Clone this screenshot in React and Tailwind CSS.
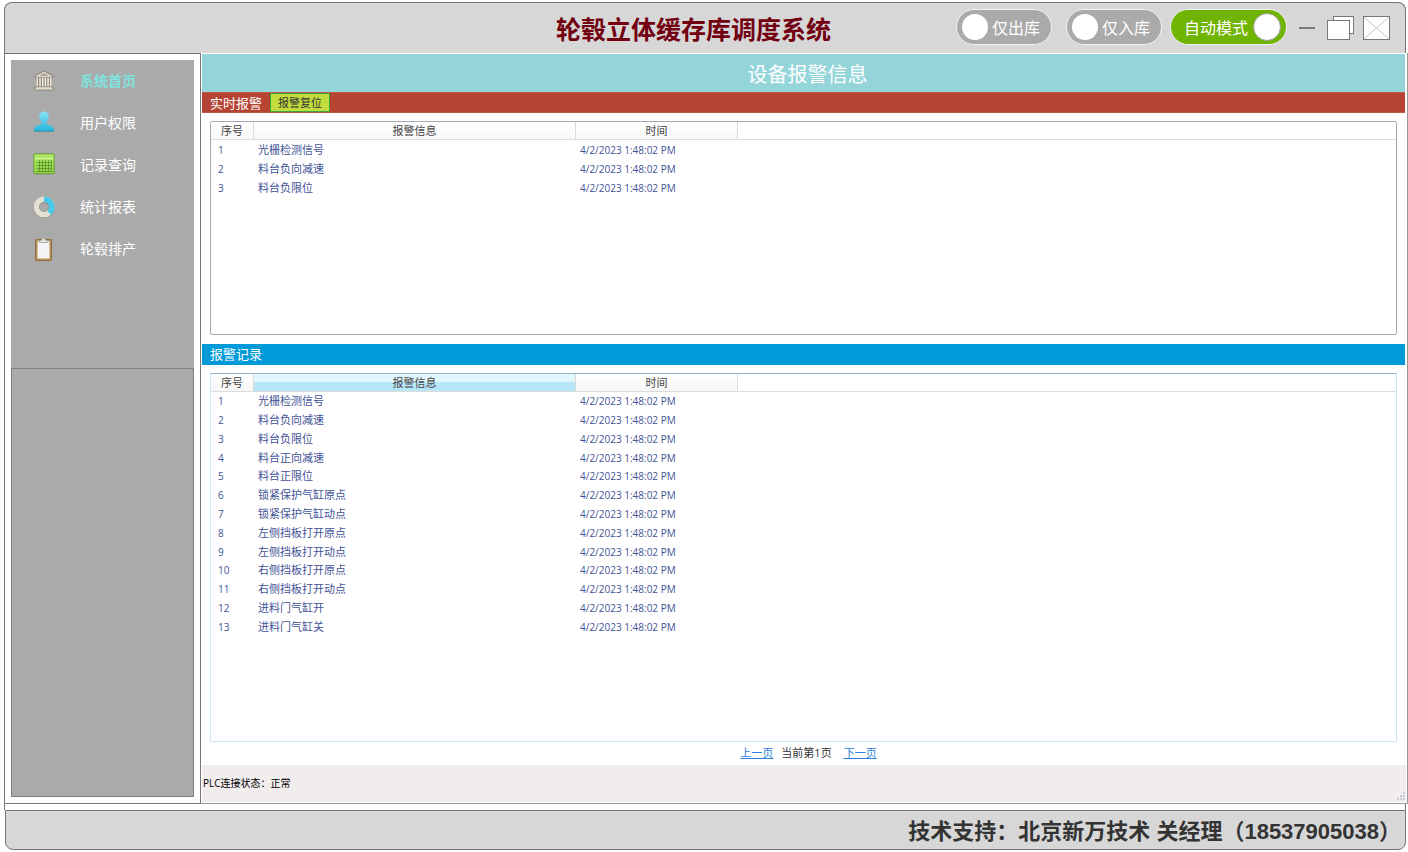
import { useState } from 'react'

const menu = [
  { label: '系统首页', Icon: BankIcon },
  { label: '用户权限', Icon: UserIcon },
  { label: '记录查询', Icon: SheetIcon },
  { label: '统计报表', Icon: DonutIcon },
  { label: '轮毂排产', Icon: ClipboardIcon },
]

const time = '4/2/2023 1:48:02 PM'

const liveAlarms = ['光栅检测信号', '料台负向减速', '料台负限位']

const alarmHistory = [
  '光栅检测信号',
  '料台负向减速',
  '料台负限位',
  '料台正向减速',
  '料台正限位',
  '锁紧保护气缸原点',
  '锁紧保护气缸动点',
  '左侧挡板打开原点',
  '左侧挡板打开动点',
  '右侧挡板打开原点',
  '右侧挡板打开动点',
  '进料门气缸开',
  '进料门气缸关',
]

function BankIcon() {
  return (
    <svg width="22" height="24" viewBox="0 0 22 24" aria-hidden="true">
      <path d="M2 7 11 2l9 5v1.300H2z" fill="#e9e4d4" stroke="#6f6a5c" strokeWidth="0.8" />
      <path d="M5.500 6.800 11 3.900l5.500 2.900z" fill="#a8a292" />
      <rect x="3" y="8.500" width="16" height="9.500" fill="#8b8575" />
      <path d="M4.200 8.500v9.500M7 8.500v9.500M9.700 8.500v9.500M12.400 8.500v9.500M15.100 8.500v9.500M17.800 8.500v9.500" stroke="#f3efe2" strokeWidth="1.500" />
      <path d="M2.300 17.800h17.400v1.600h1V21H1.300v-1.600h1z" fill="#e3dece" stroke="#6f6a5c" strokeWidth="0.6" />
    </svg>
  )
}

function UserIcon() {
  return (
    <svg width="22" height="24" viewBox="0 0 22 24" aria-hidden="true">
      <defs>
        <linearGradient id="user" x1="0" y1="0" x2="0" y2="1">
          <stop offset="0" stopColor="#8be2f7" />
          <stop offset="1" stopColor="#25b5dd" />
        </linearGradient>
      </defs>
      <path
        d="M11 .5c3 0 4.800 2.200 4.800 5 0 2.300-.9 4.200-2.200 5.300v1.900c1.300 1.200 7.400 1.600 7.400 5.800V20H1v-1.500c0-4.200 6.100-4.600 7.400-5.800v-1.900C7.100 9.700 6.200 7.800 6.200 5.500c0-2.800 1.800-5 4.800-5z"
        fill="url(#user)"
      />
      <path d="M1 20.300h20" stroke="#2e88a3" strokeWidth="0.8" />
    </svg>
  )
}

function SheetIcon() {
  return (
    <svg width="22" height="24" viewBox="0 0 22 24" aria-hidden="true">
      <defs>
        <linearGradient id="sheet" x1="0" y1="0" x2="0" y2="1">
          <stop offset="0" stopColor="#b3e866" />
          <stop offset="1" stopColor="#8fd443" />
        </linearGradient>
      </defs>
      <rect x="0.800" y="0.800" width="20.400" height="20" rx="1" fill="url(#sheet)" stroke="#659a35" />
      <path d="M1.500 5.500h19" stroke="#d6f5a5" />
      <path
        d="M3.500 9.500h15M3.500 12.500h15M3.500 15.500h15M3.500 18.500h15M6.500 7v12M9.500 7v12M12.500 7v12M15.500 7v12M18.500 7v12"
        stroke="#57902a"
        strokeWidth="0.8"
      />
    </svg>
  )
}

function DonutIcon() {
  return (
    <svg width="22" height="24" viewBox="0 0 22 24" aria-hidden="true">
      <circle cx="11" cy="12.500" r="7.600" fill="none" stroke="#7d796f" strokeWidth="6" />
      <circle cx="11" cy="12" r="7.600" fill="none" stroke="#e3dfd2" strokeWidth="5.800" />
      <path d="M11 4.400a7.600 7.600 0 0 1 5 13.300" fill="none" stroke="#49c8ea" strokeWidth="5.800" />
      <circle cx="11" cy="12" r="4.600" fill="none" stroke="#8a867b" strokeWidth="0.5" />
    </svg>
  )
}

function ClipboardIcon() {
  return (
    <svg width="22" height="24" viewBox="0 0 22 24" aria-hidden="true">
      <rect x="2.500" y="2.500" width="16" height="21" rx="0.800" fill="#b88c52" stroke="#86602f" strokeWidth="0.8" />
      <rect x="4.500" y="4" width="12" height="17.500" fill="#f4f4f6" />
      <path d="M6 5.500V3.300h2.500c0-2.600 4-2.600 4 0H15v2.200z" fill="#e6e6e0" stroke="#8b8b82" strokeWidth="0.6" />
    </svg>
  )
}

function ModeSwitch({ label, defaultOn = false }) {
  const [on, setOn] = useState(defaultOn)
  return (
    <label
      className={`flex h-9 cursor-pointer items-center rounded-full border border-[#f2f2f2] text-base leading-5 text-white ${
        on ? 'flex-row-reverse gap-[5px] bg-[#6fb400] pl-[13px] pr-[5px]' : 'gap-1 bg-[#aaa] pl-[5px] pr-[11px]'
      }`}
    >
      <input
        type="checkbox"
        role="switch"
        checked={on}
        onChange={(e) => setOn(e.target.checked)}
        className={`shrink-0 cursor-pointer appearance-none rounded-full bg-white ${
          on ? 'size-7 border border-[#9a9a9a]' : 'size-[26px]'
        }`}
      />
      <span className="pt-[2px]">{label}</span>
    </label>
  )
}

function WindowButtons() {
  return (
    <div className="flex items-center gap-[9px]">
      <button type="button" aria-label="最小化" className="mr-[3px]">
        <svg width="16" height="26" viewBox="0 0 16 26" className="block">
          <path d="M0 13h16" stroke="#7a7a7a" strokeWidth="2" />
        </svg>
      </button>
      <button type="button" aria-label="还原">
        <svg width="27" height="26" viewBox="0 0 27 26" className="block">
          <rect x="6.500" y="1.500" width="20" height="17" fill="#fff" stroke="#777" />
          <rect x="0.500" y="5.500" width="22" height="19" fill="#fff" stroke="#777" />
        </svg>
      </button>
      <button type="button" aria-label="关闭">
        <svg width="27" height="26" viewBox="0 0 27 26" className="block">
          <rect x="0.500" y="1.500" width="26" height="23" fill="#fff" stroke="#777" />
          <path d="M1 2l25 22M26 2L1 24" stroke="#b5b5b5" strokeWidth="0.8" />
        </svg>
      </button>
    </div>
  )
}

function AlarmTable({ rows, label, highlight = false, heightClass }) {
  return (
    <table aria-label={label} className={`w-full table-fixed border-separate border-spacing-0 text-[11px] leading-[14px] ${heightClass}`}>
      <colgroup>
        <col className="w-[43px]" />
        <col className="w-[322px]" />
        <col className="w-[162px]" />
        <col />
      </colgroup>
      <thead>
        <tr className="h-[18px] text-[#444] [&>th]:border-b [&>th]:border-[#dcdcdc] [&>th]:p-0 [&>th]:font-normal">
          <th className="border-r bg-linear-to-b from-white to-[#f7f7f7]">序号</th>
          <th
            className={
              highlight
                ? 'border-r border-r-[#8cc7e0] bg-linear-to-b from-[#e2f6fd] from-45% to-[#b7e6f9] to-50%'
                : 'border-r bg-linear-to-b from-white to-[#f7f7f7]'
            }
          >
            报警信息
          </th>
          <th className="border-r bg-linear-to-b from-white to-[#f7f7f7]">时间</th>
          <td className="border-b border-[#dcdcdc] p-0"></td>
        </tr>
      </thead>
      <tbody className="text-[#3f5396]">
        {rows.map((name, i) => (
          <tr key={name} className="[&>td]:p-0">
            <td className="text-[10px]"><span className="pl-[7px]">{i + 1}</span></td>
            <td><span className="pl-1">{name}</span></td>
            <td className="text-[10px]"><span className="pl-1">{time}</span></td>
            <td></td>
          </tr>
        ))}
      </tbody>
    </table>
  )
}

export default function App() {
  const [active, setActive] = useState('系统首页')

  return (
    <div className="flex min-h-screen flex-col bg-white py-[2px] pl-1 font-['Open_Sans','Noto_Sans_CJK_SC',sans-serif] text-black">
      <header className="mr-[2px] grid h-[51px] grid-cols-[1fr_auto_1fr] items-center rounded-t-lg border border-b-0 border-[#777] bg-[#d7d7d7] pr-[15px]">
        <h1 className="col-start-2 pr-2 pt-[2px] text-[25px] leading-8 font-bold text-[#720010]">轮毂立体缓存库调度系统</h1>
        <div className="flex items-center justify-end">
          <div className="mr-3 flex items-center pb-[2px]">
            <div className="mr-[14px]"><ModeSwitch label="仅出库" /></div>
            <div className="mr-2"><ModeSwitch label="仅入库" /></div>
            <ModeSwitch label="自动模式" defaultOn />
          </div>
          <WindowButtons />
        </div>
      </header>

      <div className="flex flex-1">
        <aside className="flex w-[197px] shrink-0 flex-col border border-[#777] p-[6px]">
          <nav className="h-[308px] bg-[#aaa]">
            {menu.map(({ label, Icon }) => (
              <button
                key={label}
                type="button"
                onClick={() => setActive(label)}
                aria-current={active === label ? 'page' : undefined}
                className={`flex h-[42px] w-full items-center gap-[25px] pl-[22px] text-sm ${
                  active === label ? 'font-bold text-[#7fe3df]' : 'text-white'
                }`}
              >
                <Icon />
                <span>{label}</span>
              </button>
            ))}
          </nav>
          <div className="flex-1 border border-[#808080] bg-[#aaa]" />
        </aside>

        <main className="flex min-w-0 flex-1 flex-col border-r border-b border-[#999] pt-px pb-px pl-px">
          <h2 className="mr-[2px] h-[38px] bg-[#94d5da] pl-2 pt-[2px] text-center text-xl leading-[38px] text-white">设备报警信息</h2>

          <div className="mr-[2px] flex h-[21px] items-center gap-2 border-y border-[#c05a48] bg-[#b54433] pl-2 text-white">
            <h3 className="text-[13px] leading-[18px]">实时报警</h3>
            <button type="button" className="h-[19px] border border-[#3aa33c] bg-[#c1dc3c] px-[7px] text-[11px] leading-[17px] text-[#333]">
              报警复位
            </button>
          </div>
          <div className="mt-2 mr-[10px] ml-2 h-[214px] rounded-xs border border-[#a4a7ad]">
            <AlarmTable rows={liveAlarms} label="实时报警" heightClass="h-[75px]" />
          </div>

          <div className="mt-[9px] mr-[2px] flex h-[21px] items-start bg-[#009ad8] pl-2 pt-px text-white">
            <h3 className="text-[13px] leading-[18px]">报警记录</h3>
          </div>
          <div className="mt-2 mr-[10px] ml-2 flex-1 border border-[#cde6f3] border-t-[#8fb4c8]">
            <AlarmTable rows={alarmHistory} label="报警记录" highlight heightClass="h-[262px]" />
          </div>

          <div className="flex h-[23px] items-center justify-center pl-2 text-[11px] text-[#333]">
            <a href="#prev" className="text-[#2b7fe0] underline">上一页</a>
            <span className="mr-3 ml-2">当前第1页</span>
            <a href="#next" className="text-[#2b7fe0] underline">下一页</a>
          </div>

          <div className="mr-px flex h-[37px] items-center justify-between bg-[#f0edec] pl-px text-[10px]">
            <p>PLC连接状态：正常</p>
            <svg width="10" height="10" viewBox="0 0 10 10" className="self-end" aria-hidden="true">
              <path d="M7 0h2v2H7zM4 3h2v2H4zM7 3h2v2H7zM1 6h2v2H1zM4 6h2v2H4zM7 6h2v2H7z" fill="#c9ccd6" />
            </svg>
          </div>
        </main>
      </div>

      <div className="mr-[2px] h-[6px] border-x border-[#777]" />
      <footer className="mr-[2px] ml-px flex h-10 items-center justify-end rounded-b-lg border border-[#777] bg-[#d7d7d7] pt-1 pr-1 font-['Liberation_Sans','Noto_Sans_CJK_SC',sans-serif] text-[22px] leading-8 font-bold text-[#333]">
        技术支持：北京新万技术 关经理（18537905038）
      </footer>
    </div>
  )
}
